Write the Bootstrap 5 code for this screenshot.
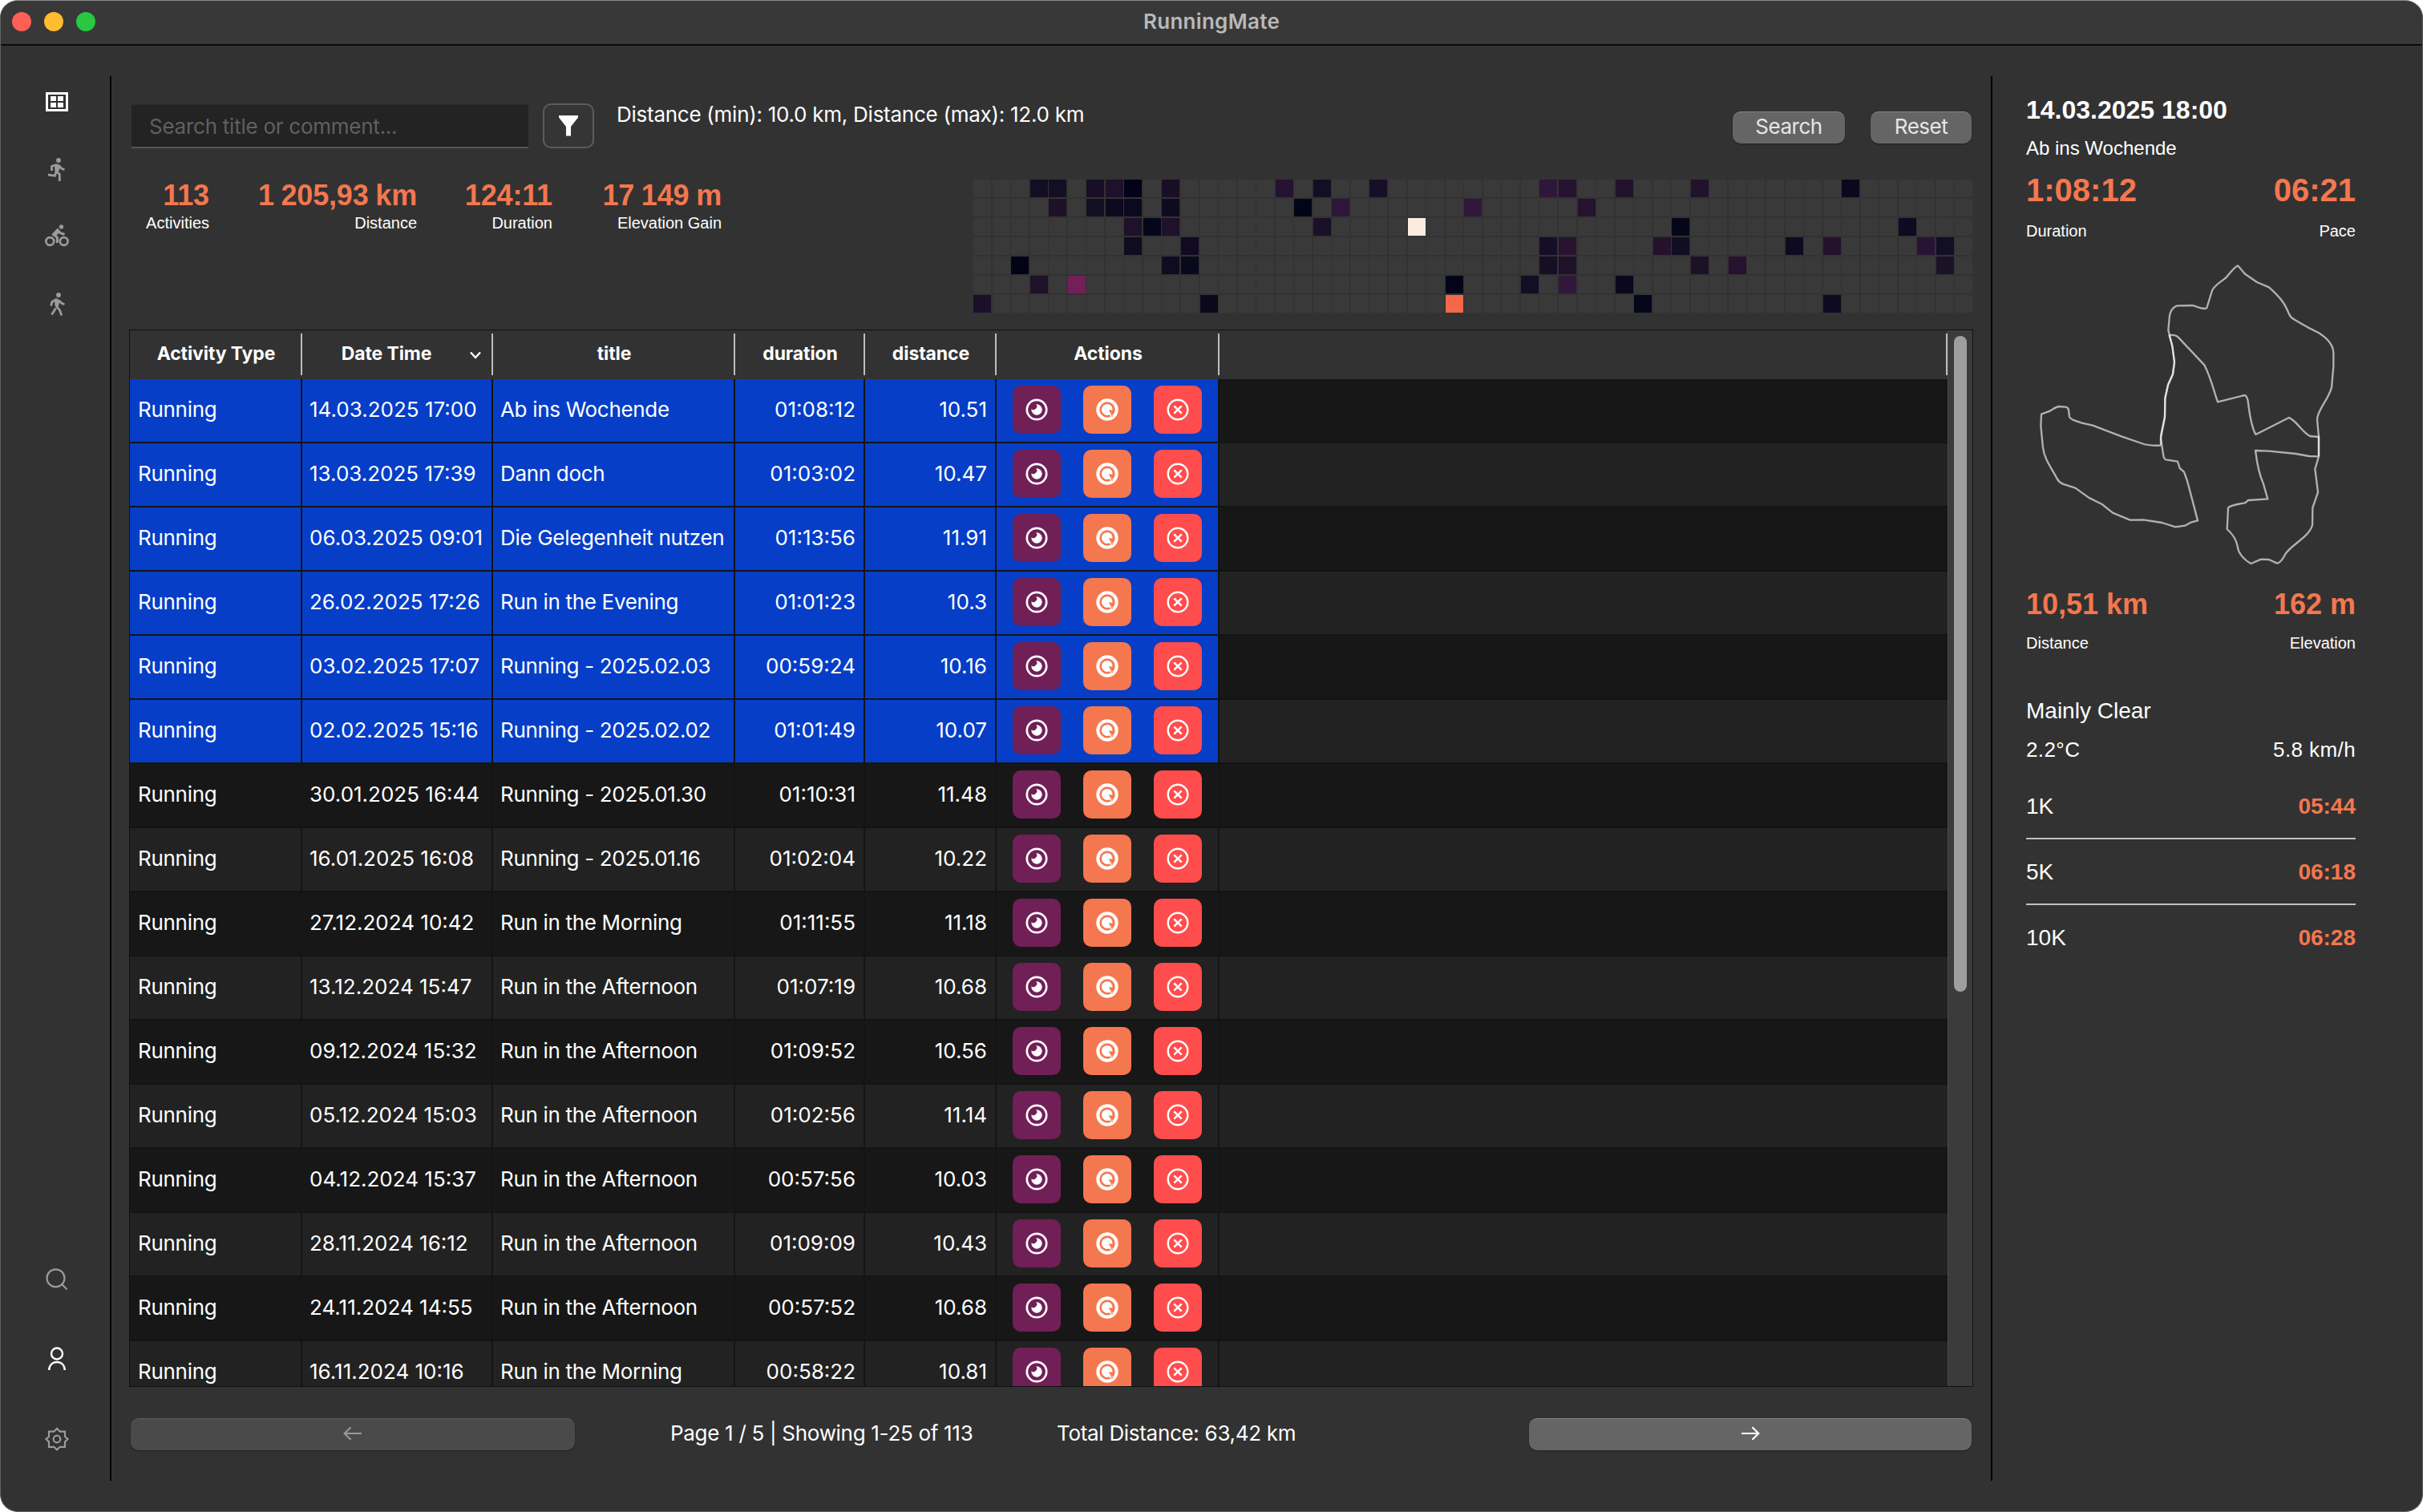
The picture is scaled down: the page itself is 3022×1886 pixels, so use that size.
<!DOCTYPE html>
<html lang="en" data-bs-theme="dark">
<head>
<meta charset="utf-8">
<title>RunningMate</title>
<link href="https://cdn.jsdelivr.net/npm/bootstrap@5.3.0/dist/css/bootstrap.min.css" rel="stylesheet">
<style>
body{background:#fff;font-family:Inter,"Noto Sans",sans-serif;font-size:26px;color:#fff;line-height:32px;overflow:hidden}
.app{width:3022px;height:1886px;background:#323232;border:1px solid #626262;border-top-color:#8d8d8d;border-radius:22px;overflow:hidden}
.titlebar{height:56px;background:#383838;border-bottom:2px solid #0b0b0b;flex:none}
.lights{width:104px;margin-left:14px;margin-top:-2px}
.light{width:24px;height:24px;border-radius:50%}
.apptitle{color:#b9b9b9;font-weight:600;letter-spacing:.3px;margin-right:118px;padding-bottom:3px}
.side{width:138px;padding-top:38px;padding-bottom:38px}
.side-in{border-right:2px solid #000;width:138px;padding-left:3px}
.side svg,.glyph{display:block;flex:none}
.main{width:2344px;padding:72px 24px 0 23px;flex:none}
.detail{width:538px;margin:38px 0;border-left:2px solid #000;padding:22px 83px 0 42px;font-family:"Liberation Sans",Arial,sans-serif;flex:none}
.toolrow{height:58px;padding-left:2px}
.search{width:495px;height:55px;margin-top:1px;background:#232323;border:0;border-top:1px solid #2b2b2b;border-bottom:2px solid #565656;border-radius:0;padding:0 0 0 22px;font-size:26px;color:#fff;letter-spacing:-.25px}
.search::placeholder{color:#606060;opacity:1}
.filter{width:64px;height:56px;margin-left:18px;border:2px solid #5c5c5c;border-radius:10px;background:#353535;padding:0}
.criteria{margin-left:28px;margin-top:-2px;letter-spacing:-.26px}
.mac{height:40px;border:0;border-top:1px solid #858585;border-radius:10px;background:#656565;color:#e6e6e6;font-size:26px;line-height:32px;letter-spacing:-.5px;padding:0 0 4px;box-shadow:0 1px 2px rgba(0,0,0,.35)}
.mac.off{background:#4a4a4a;border-top-color:#5c5c5c;color:#989898}
.pageinfo{letter-spacing:-.3px;padding-bottom:2px}
.statcell{font-family:"Liberation Sans",Arial,sans-serif;text-align:right}
.statcell .big{letter-spacing:-.15px;word-spacing:-1.200px}
.statcell .cap{margin-top:-2px}
.big{font-weight:700;font-size:36px;line-height:44px;color:#f4774f;white-space:nowrap}
.cap{font-size:20px;line-height:28px}
.heat{display:grid;grid-template-columns:repeat(53,22px);grid-template-rows:repeat(7,22px);row-gap:2px;column-gap:1.548px;width:1247px;margin:37px -2px 21px 0}
.heat i{background:#393939}
.tbox{height:1319px;width:2300px;margin-left:-1px;border:1px solid #101010;overflow:hidden}
.runs{width:2267px;table-layout:fixed;margin:0;color:#fff;border-collapse:separate;border-spacing:0}
.runs>thead>tr>th{height:61px;padding:0 0 4px;background:#323232;color:#fff;border:0;font-size:23px;font-weight:700;text-align:center;vertical-align:middle;box-shadow:none;position:relative;line-height:30px;letter-spacing:-.1px}
.runs>thead>tr>th::after{content:"";position:absolute;right:0;top:4px;width:2px;height:52px;background:#bdbdbd}
.runs>tbody>tr>td{height:80px;padding:0 10px 3px 9px;border:0;border-bottom:2px solid #141414;border-right:2px solid #141414;background:#171717;color:#fff;box-shadow:none;vertical-align:middle;white-space:nowrap;line-height:32px}
.runs>tbody>tr:nth-child(even)>td{background:#222}
.runs>tbody>tr.sel>td:not(.rest){background:#063ec8}
.runs>tbody>tr>td.rest{border-right:0}
.runs>tbody>tr>td.kind{letter-spacing:-.3px;padding-left:10px}
.runs>tbody>tr>td.name{letter-spacing:-.32px}
.runs>tbody>tr>td.acts{padding:0 0 2px 20px}
.num{text-align:right}
.act{width:60px;height:60px;border-radius:10px;border:0;padding:0;display:flex;align-items:center;justify-content:center}
.view{background:#701f57}.edit{background:#f4774f}.del{background:#ff4d4d}
.track{width:31px;background:#3b3b3b;border-left:1px solid #4a4a4a;padding:7px 7px}
.thumb{width:16px;height:818px;border-radius:8px;background:#9e9e9e}
.rec{border-bottom:2px solid #bfbfbf;height:59px;margin-bottom:23px;font-size:28px;line-height:36px}
.rec b{color:#f4774f}
</style>
<script src="https://cdn.jsdelivr.net/npm/bootstrap@5.3.0/dist/js/bootstrap.bundle.min.js"></script>
</head>
<body>
<svg width="0" height="0" class="position-absolute">
  <defs>
    <symbol id="i-view" viewBox="0 0 28 28"><circle cx="14" cy="14" r="12.200" fill="none" stroke="#fff" stroke-width="2.700"/><path d="M13.200 7.400A6.700 6.700 0 1 1 7.400 13.200 3.600 3.600 0 0 0 13 12.600 3.600 3.600 0 0 0 13.200 7.400Z" fill="#fff"/></symbol>
    <symbol id="i-edit" viewBox="0 0 28 28"><circle cx="14" cy="14" r="11.700" fill="none" stroke="#fff" stroke-width="4"/><path d="M14 7a7 7 0 1 0 3 13.300l4 2.700-1.600-6.400 1-.8V12.500A7 7 0 0 0 14 7Z" fill="#fff"/><path d="M16 14.300l5.500.4-2 2.800 1.400 5.800-2.600-2.300Z" fill="#f4774f"/><path d="M15.500 14.500l2.600 8 1.300-1.500Z" fill="#fff"/></symbol>
    <symbol id="i-del" viewBox="0 0 28 28"><circle cx="14" cy="14" r="12.300" fill="none" stroke="#fff" stroke-width="2.400"/><path d="M9.300 9.300l9.400 9.400M18.700 9.300l-9.400 9.400" stroke="#fff" stroke-width="2.500"/></symbol>
  </defs>
</svg>
<div class="app d-flex flex-column">
  <header class="titlebar d-flex align-items-center">
    <div class="lights d-flex justify-content-between">
      <span class="light" style="background:#ff5f57"></span><span class="light" style="background:#febc2e"></span><span class="light" style="background:#28c840"></span>
    </div>
    <div class="flex-fill text-center apptitle">RunningMate</div>
  </header>
  <div class="d-flex flex-fill">
    <nav class="side">
      <div class="side-in h-100 d-flex flex-column align-items-center">
        <svg style="margin-top:20px" width="28" height="24" viewBox="0 0 28 24"><rect x="1.500" y="1.500" width="25" height="21" fill="none" stroke="#fff" stroke-width="3"/><path d="M6 5h7v6H6zM15 5h7v6h-7zM6 13h7v6H6zM15 13h7v6h-7z" fill="#fff"/></svg>
        <svg style="margin-top:58px" width="30" height="30" viewBox="0 0 30 30" fill="none" stroke="#9b9b9b" stroke-width="2.800"><circle cx="17" cy="3" r="2.900" fill="#9b9b9b" stroke="none"/><path d="M8.500 16V10.500L15 8.200 M17.500 9.500C19.500 13 21 13.800 24.500 14.500 M4 21l8.500 1.300L14 17l4.300 3.500V29"/><path d="M12 8.500l5-1 2 4-2 6-4.500-.5z" fill="#9b9b9b" stroke="none"/></svg>
        <svg style="margin-top:53px" width="30" height="28" viewBox="0 0 30 28" fill="none" stroke="#9b9b9b" stroke-width="2.700"><circle cx="20.500" cy="2.900" r="2.700" fill="#9b9b9b" stroke="none"/><circle cx="6.300" cy="21" r="4.900"/><circle cx="23.700" cy="21" r="4.900"/><path d="M15.300 23V16L10.500 12.500 16 6.800 19 10.500 24.500 12.500" stroke-width="3"/><path d="M9.500 11.500L15 5.500l4 3-4.500 5.500z" fill="#9b9b9b" stroke="none"/></svg>
        <svg style="margin-top:57px" width="30" height="30" viewBox="0 0 30 30" fill="none" stroke="#9b9b9b" stroke-width="2.800"><circle cx="17" cy="3" r="2.900" fill="#9b9b9b" stroke="none"/><path d="M7.500 16.500L9 11.500 15 8 M17.500 9.500C19.500 13 21 13.800 24.500 14.500 M13.500 19.500L8.500 27.500 M14 17l4.300 4.500 2.500 7"/><path d="M12 9.500l4-2 2.500 3.500-2 7-4-1z" fill="#9b9b9b" stroke="none"/></svg>
        <svg class="mt-auto" width="30" height="30" viewBox="0 0 30 30" fill="none" stroke="#9b9b9b" stroke-width="2.200"><circle cx="13.500" cy="13.300" r="11"/><path d="M21.500 21.300l6 6"/></svg>
        <svg style="margin-top:69px" width="30" height="30" viewBox="0 0 30 30" fill="none" stroke="#fff" stroke-width="2.400"><circle cx="15" cy="8.500" r="7"/><path d="M5.200 29C5.500 22.500 9.500 19 15 19s9.500 3.500 9.800 10"/></svg>
        <svg style="margin-top:70px;margin-bottom:37px" width="30" height="30" viewBox="0 0 30 30" fill="none" stroke="#9b9b9b" stroke-width="2.200"><path d="M15 1.800l3.700 3.900H25V12l3.500 3L25 18.500v6.300h-6.300L15 28.300l-3.700-3.500H5v-6.300L1.500 15 5 12V5.700h6.300z"/><circle cx="15" cy="15" r="4.300"/></svg>
      </div>
    </nav>
    <main class="main">
      <div class="toolrow d-flex align-items-start">
        <input class="search form-control flex-grow-0" placeholder="Search title or comment...">
        <button class="filter btn d-flex justify-content-center align-items-center flex-shrink-0"><svg width="24" height="26" viewBox="0 0 24 26"><path d="M0 0h24v2.500L15 14v11.500H9V14L0 2.500z" fill="#fff"/></svg></button>
        <div class="criteria flex-fill">Distance (min): 10.0 km, Distance (max): 12.0 km</div>
        <button class="mac" style="width:140px;margin:10px 32px 0 0">Search</button>
        <button class="mac" style="width:126px;margin:10px 0 0 0">Reset</button>
      </div>
      <div class="d-flex justify-content-between">
        <div class="d-flex" style="padding-top:35px">
          <div class="statcell" style="width:99px"><div class="big">113</div><div class="cap">Activities</div></div>
          <div class="statcell" style="width:259px"><div class="big">1 205,93 km</div><div class="cap">Distance</div></div>
          <div class="statcell" style="width:169px"><div class="big">124:11</div><div class="cap">Duration</div></div>
          <div class="statcell" style="width:211px"><div class="big">17 149 m</div><div class="cap">Elevation Gain</div></div>
        </div>
        <div class="heat" id="heat"></div>
      </div>
      <div class="tbox d-flex">
        <table class="table runs flex-shrink-0">
          <colgroup><col style="width:215px"><col style="width:238px"><col style="width:302px"><col style="width:162px"><col style="width:164px"><col style="width:278px"><col></colgroup>
          <thead><tr><th>Activity Type</th><th style="padding-right:28px">Date Time<svg class="position-absolute" style="right:13px;top:25px" width="18" height="12" viewBox="0 0 18 12"><path d="M3 2.500l6 6.500 6-6.500" fill="none" stroke="#fff" stroke-width="2.400"/></svg></th><th>title</th><th>duration</th><th>distance</th><th>Actions</th><th></th></tr></thead>
          <tbody id="runs"></tbody>
        </table>
        <div class="track"><div class="thumb"></div></div>
      </div>
      <div class="d-flex align-items-center" style="margin-top:39px;padding-left:1px;height:40px">
        <button class="mac off d-flex justify-content-center align-items-center" style="width:554px"><svg class="glyph" width="24" height="18" viewBox="0 0 24 18"><path d="M23 9H2M9.500 1.200L1.700 9l7.800 7.800" fill="none" stroke="currentColor" stroke-width="2.200"/></svg></button>
        <div class="pageinfo" style="margin-left:119px;width:482px">Page 1 / 5 | Showing 1-25 of 113</div>
        <div class="pageinfo flex-fill">Total Distance: 63,42 km</div>
        <button class="mac d-flex justify-content-center align-items-center" style="width:552px;color:#fff"><svg class="glyph" width="24" height="18" viewBox="0 0 24 18"><path d="M1 9h21M14.500 1.200L22.300 9l-7.800 7.800" fill="none" stroke="currentColor" stroke-width="2.200"/></svg></button>
      </div>
    </main>
    <aside class="detail">
      <div class="fw-bold" style="font-size:32px;line-height:40px;margin-bottom:12px">14.03.2025 18:00</div>
      <div style="font-size:24px;line-height:32px;margin-bottom:12px">Ab ins Wochende</div>
      <div class="big d-flex justify-content-between" style="font-size:40px;line-height:48px;margin-bottom:13px"><span>1:08:12</span><span>06:21</span></div>
      <div class="cap d-flex justify-content-between"><span>Duration</span><span>Pace</span></div>
      <svg class="glyph" style="margin:8px 0 2px -27px" width="460" height="420" viewBox="0 0 1380 1260" fill="none" stroke="#fff" stroke-opacity=".62" stroke-width="7" stroke-linejoin="round">
        <path d="M585 737C560 738 540 737 522 732L440 704 330 662 290 653C260 643 246 639 243 630L240 604Q237 593 228 593L204 591Q192 593 170 608L138 620 136 665 144 745C150 790 175 820 196 860Q203 874 218 881L265 896 315 932 365 957 405 989 470 1016 520 1015 590 1026 640 1042 675 1037 700 1024 723 1018 706 953 684 870 672 836 656 822 648 797 604 790Q596 788 594 770L585 710 600 630 601 560 612 510 630 470 636 425 628 365 616 322"/>
        <path d="M585 735L585 700 600 630 601 560 612 510 630 470 636 425 628 365 613 305 618 250 Q624 222 645 214L705 213C725 220 750 230 757 222L777 157C790 132 820 120 833 104Q862 68 873 64L900 95 945 126 990 145C1040 190 1050 210 1065 245Q1072 260 1085 266L1135 295 1175 315C1215 340 1230 365 1231 390L1231 440 1224 520C1210 570 1170 605 1170 640L1176 705V778L1162 825 1173 912 1153 970 1152 1035C1140 1080 1070 1110 1050 1145Q1035 1175 1020 1178L990 1164 960 1163 922 1179C905 1170 875 1145 872 1115 868 1090 850 1065 833 1050L837 970Q845 960 900 952L912 942 985 937 968 878C955 850 945 805 939 756L990 758 1090 768 1140 777 1173 778"/>
        <path d="M1176 778V705L1143 702C1115 690 1090 640 1064 633L940 696C920 660 915 600 911 570Q907 550 898 549L798 574C785 540 775 490 748 436L650 332Q640 322 620 324"/>
      </svg>
      <div class="big d-flex justify-content-between" style="margin-bottom:12px"><span>10,51 km</span><span>162 m</span></div>
      <div class="cap d-flex justify-content-between" style="margin-bottom:53px"><span>Distance</span><span>Elevation</span></div>
      <div style="font-size:28px;line-height:36px;margin-bottom:13px">Mainly Clear</div>
      <div class="d-flex justify-content-between" style="font-size:26px;line-height:34px;margin-bottom:36px;letter-spacing:.4px"><span>2.2°C</span><span>5.8 km/h</span></div>
      <div class="rec d-flex justify-content-between"><span>1K</span><b>05:44</b></div>
      <div class="rec d-flex justify-content-between"><span>5K</span><b>06:18</b></div>
      <div class="rec d-flex justify-content-between border-0"><span>10K</span><b>06:28</b></div>
    </aside>
  </div>
</div>
<script>
const runs=[
["14.03.2025 17:00","Ab ins Wochende","01:08:12","10.51"],
["13.03.2025 17:39","Dann doch","01:03:02","10.47"],
["06.03.2025 09:01","Die Gelegenheit nutzen","01:13:56","11.91"],
["26.02.2025 17:26","Run in the Evening","01:01:23","10.3"],
["03.02.2025 17:07","Running - 2025.02.03","00:59:24","10.16"],
["02.02.2025 15:16","Running - 2025.02.02","01:01:49","10.07"],
["30.01.2025 16:44","Running - 2025.01.30","01:10:31","11.48"],
["16.01.2025 16:08","Running - 2025.01.16","01:02:04","10.22"],
["27.12.2024 10:42","Run in the Morning","01:11:55","11.18"],
["13.12.2024 15:47","Run in the Afternoon","01:07:19","10.68"],
["09.12.2024 15:32","Run in the Afternoon","01:09:52","10.56"],
["05.12.2024 15:03","Run in the Afternoon","01:02:56","11.14"],
["04.12.2024 15:37","Run in the Afternoon","00:57:56","10.03"],
["28.11.2024 16:12","Run in the Afternoon","01:09:09","10.43"],
["24.11.2024 14:55","Run in the Afternoon","00:57:52","10.68"],
["16.11.2024 10:16","Run in the Morning","00:58:22","10.81"]];
const act=(c)=>`<button class="act ${c}"><svg width="28" height="28"><use href="#i-${c}"/></svg></button>`;
document.getElementById("runs").innerHTML=runs.map((r,i)=>`<tr class="${i<6?"sel":""}"><td class="kind">Running</td><td>${r[0]}</td><td class="name">${r[1]}</td><td class="num">${r[2]}</td><td class="num">${r[3]}</td><td class="acts"><div class="d-flex" style="gap:28px">${act("view")}${act("edit")}${act("del")}</div></td><td class="rest"></td></tr>`).join("");
// column -> colour for each weekday row
const days=[
{3:"#140e24",4:"#140e24",6:"#180e25",7:"#1e1129",8:"#020317",10:"#180e25",16:"#25122f",18:"#140e24",21:"#160f26",30:"#2f173a",31:"#25122f",34:"#22122c",38:"#22122c",46:"#09081c"},
{4:"#1d1127",6:"#130f24",7:"#0d091f",8:"#0b091e",10:"#0e0a20",17:"#030418",19:"#2d1638",26:"#311739",32:"#25122f"},
{8:"#1e1129",9:"#05061a",10:"#1e1129",18:"#1a1027",23:"#fdebdd",37:"#05061a",49:"#0e0a20"},
{8:"#100b21",11:"#100b21",30:"#160e25",31:"#28142f",36:"#23122a",37:"#120d22",43:"#0e0a20",45:"#24122d",50:"#271435",51:"#120e24"},
{2:"#020317",10:"#0f0b21",11:"#09081c",30:"#160e25",31:"#1f1129",38:"#1d1128",40:"#25122f",51:"#1d1128"},
{3:"#1f1129",5:"#751f5a",25:"#030418",29:"#120e24",31:"#311739",34:"#09081c"},
{0:"#1a1029",12:"#09081c",25:"#f3684a",35:"#05061a",45:"#0f0a21"}];
document.getElementById("heat").innerHTML=days.map(d=>Array.from({length:53},(_,c)=>d[c]?`<i style="background:${d[c]}"></i>`:"<i></i>").join("")).join("");
</script>
</body>
</html>
